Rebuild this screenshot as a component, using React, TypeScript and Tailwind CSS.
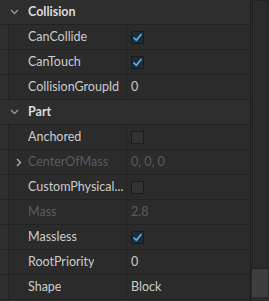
import React from "react";

type Row =
  | { kind: "header"; label: string }
  | {
      kind: "prop";
      label: string;
      value?: string;
      check?: boolean;
      disabled?: boolean;
      expand?: boolean;
    };

const rows: Row[] = [
  { kind: "header", label: "Collision" },
  { kind: "prop", label: "CanCollide", check: true },
  { kind: "prop", label: "CanTouch", check: true },
  { kind: "prop", label: "CollisionGroupId", value: "0" },
  { kind: "header", label: "Part" },
  { kind: "prop", label: "Anchored", check: false },
  { kind: "prop", label: "CenterOfMass", value: "0, 0, 0", disabled: true, expand: true },
  { kind: "prop", label: "CustomPhysical...", check: false },
  { kind: "prop", label: "Mass", value: "2.8", disabled: true },
  { kind: "prop", label: "Massless", check: true },
  { kind: "prop", label: "RootPriority", value: "0" },
  { kind: "prop", label: "Shape", value: "Block" },
];

function Checkbox({ on }: { on: boolean }) {
  return (
    <div
      className={
        on
          ? "flex h-[13px] w-[13px] items-center justify-center border border-[#1a1a1a] bg-[#1d2c38]"
          : "h-[13px] w-[13px] border border-[#1c1c1c] bg-[#333333]"
      }
    >
      {on && (
        <svg width="11" height="11" viewBox="0 0 11 11" fill="none">
          <path d="M1.5 5.5 L4.3 8.3 L9.5 2" stroke="#5ab8ec" strokeWidth="1.6" />
        </svg>
      )}
    </div>
  );
}

function Chevron({ open }: { open: boolean }) {
  return open ? (
    <svg width="9" height="6" viewBox="0 0 9 6" fill="none">
      <path d="M1 1 L4.5 4.5 L8 1" stroke="#9a9a9a" strokeWidth="1.3" />
    </svg>
  ) : (
    <svg width="6" height="9" viewBox="0 0 6 9" fill="none">
      <path d="M1 1 L4.5 4.5 L1 8" stroke="#b0b0b0" strokeWidth="1.4" />
    </svg>
  );
}

export default function App() {
  return (
    <div
      className="flex h-[301px] w-[269px] overflow-hidden bg-[#2e2e2e] text-[12.5px]"
      style={{ fontFamily: "Lato, 'Noto Sans', sans-serif" }}
    >
      <div className="flex w-[251px] flex-col border-r border-[#1f1f1f]">
        {rows.map((row, i) =>
          row.kind === "header" ? (
            <div
              key={i}
              className="flex h-[25px] items-center border-b border-[#222222] bg-[#2e2e2e]"
            >
              <div className="flex w-[28px] justify-center pl-[1px]">
                <Chevron open />
              </div>
              <span className="font-bold text-[#dcdcdc]">{row.label}</span>
            </div>
          ) : (
            <div key={i} className="flex h-[25px] border-b border-[#222222]">
              <div className="flex w-[8px] items-center bg-[#2e2e2e]" />
              <div className="flex w-[119px] items-center border-r border-l border-[#222222] bg-[#2b2b2b]">
                <div className="flex w-[19px] justify-center">
                  {row.expand && <Chevron open={false} />}
                </div>
                <span
                  className={
                    row.disabled
                      ? "truncate text-[#5c5c5c]"
                      : "truncate text-[#cccccc]"
                  }
                >
                  {row.label}
                </span>
              </div>
              <div className="flex flex-1 items-center bg-[#2b2b2b] pl-[4px]">
                {row.check !== undefined ? (
                  <Checkbox on={row.check} />
                ) : (
                  <span
                    className={
                      row.disabled ? "text-[#5c5c5c]" : "text-[#cccccc]"
                    }
                  >
                    {row.value}
                  </span>
                )}
              </div>
            </div>
          )
        )}
      </div>
      <div className="flex flex-1 flex-col bg-[#2a2a2a]">
        <div className="mx-[1px] mt-0 h-[269px] border border-[#222222] bg-[#2b2b2b]" />
        <div className="mx-[1px] h-[28px] bg-[#3e3e3e]" />
      </div>
    </div>
  );
}
